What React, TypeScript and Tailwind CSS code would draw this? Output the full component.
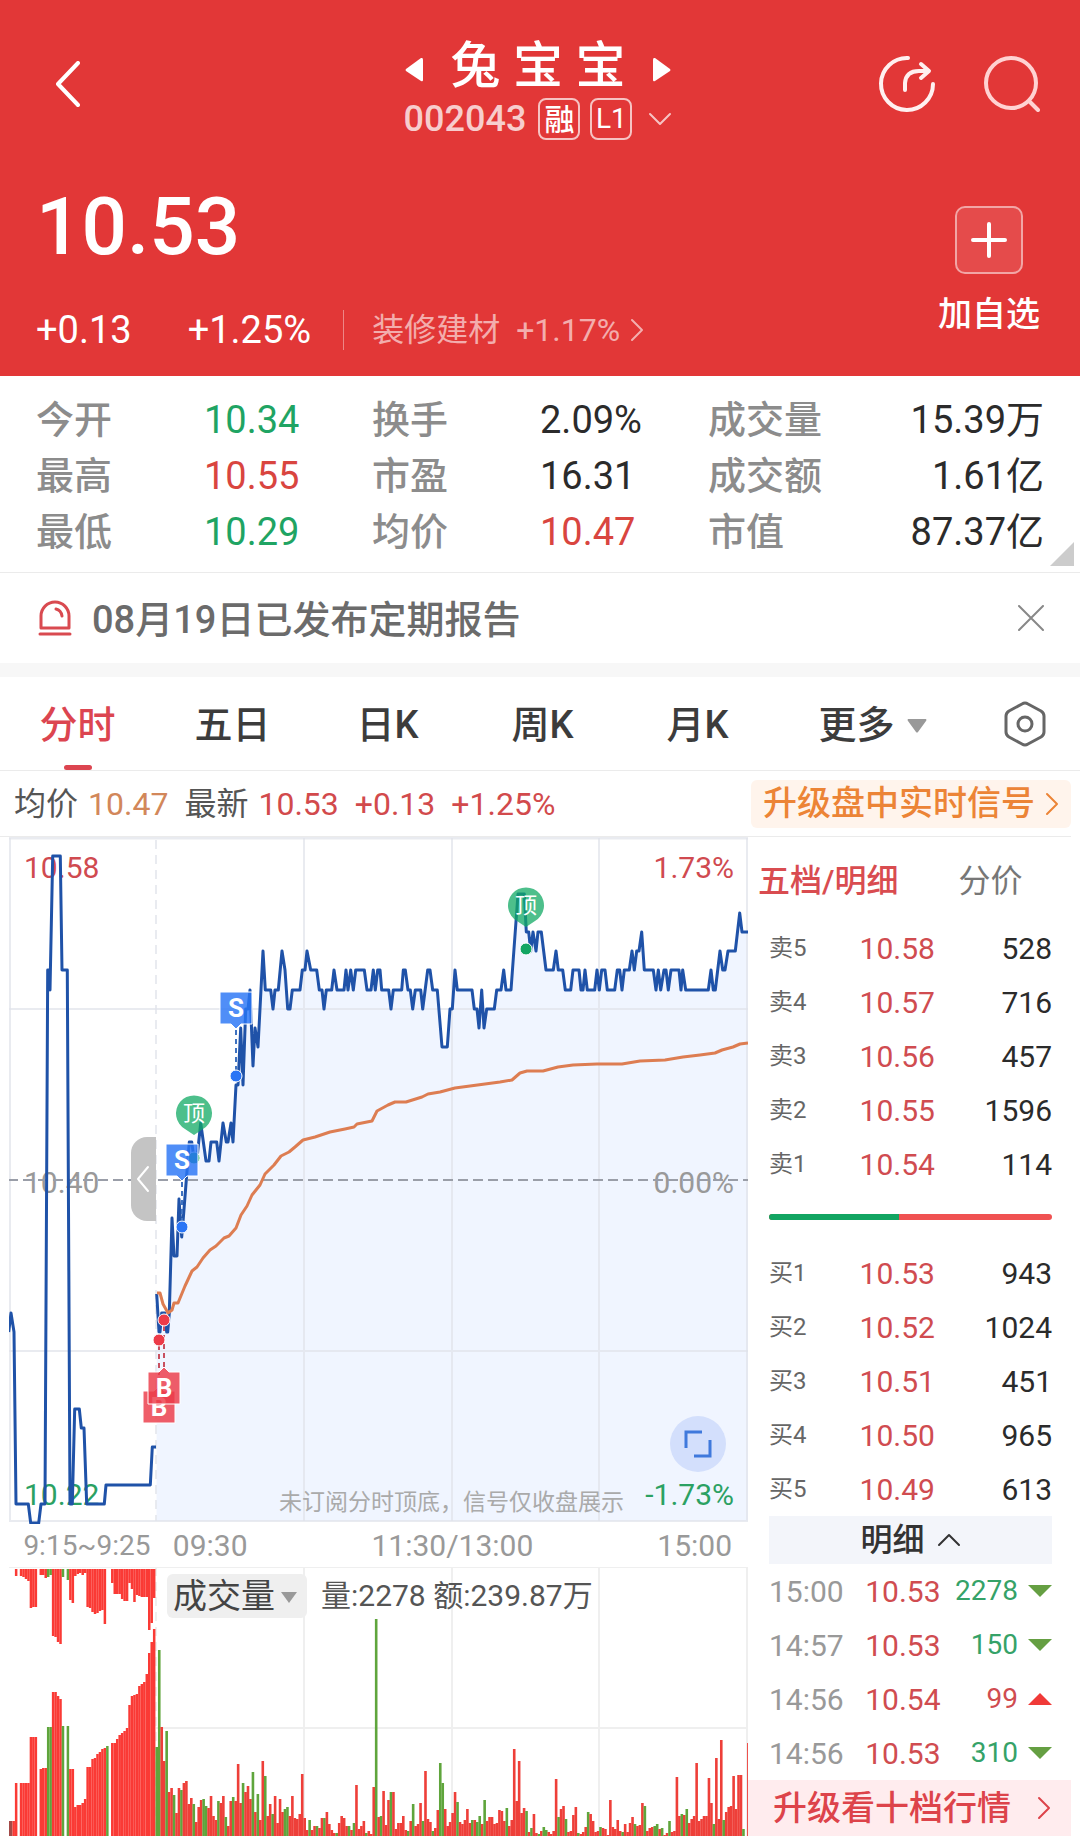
import { useState } from 'react'
import clsx from 'clsx'

type Point = [number, number]

type Level = {
  label: string
  price: string
  amount: number
}

type Trade = {
  time: string
  price: string
  amount: number
  side: 'buy' | 'sell'
}

const stats = [
  { label: '今开', value: '10.34', color: 'text-[#1fa463]' },
  { label: '换手', value: '2.09%', color: 'text-[#2b2b2b]' },
  { label: '成交量', value: '15.39万', color: 'text-[#2b2b2b]' },
  { label: '最高', value: '10.55', color: 'text-[#d9453f]' },
  { label: '市盈', value: '16.31', color: 'text-[#2b2b2b]' },
  { label: '成交额', value: '1.61亿', color: 'text-[#2b2b2b]' },
  { label: '最低', value: '10.29', color: 'text-[#1fa463]' },
  { label: '均价', value: '10.47', color: 'text-[#d9453f]' },
  { label: '市值', value: '87.37亿', color: 'text-[#2b2b2b]' }
]

const periods = ['分时', '五日', '日K', '周K', '月K']

const asks: Level[] = [
  { label: '卖5', price: '10.58', amount: 528 },
  { label: '卖4', price: '10.57', amount: 716 },
  { label: '卖3', price: '10.56', amount: 457 },
  { label: '卖2', price: '10.55', amount: 1596 },
  { label: '卖1', price: '10.54', amount: 114 }
]

const bids: Level[] = [
  { label: '买1', price: '10.53', amount: 943 },
  { label: '买2', price: '10.52', amount: 1024 },
  { label: '买3', price: '10.51', amount: 451 },
  { label: '买4', price: '10.50', amount: 965 },
  { label: '买5', price: '10.49', amount: 613 }
]

const trades: Trade[] = [
  { time: '15:00', price: '10.53', amount: 2278, side: 'sell' },
  { time: '14:57', price: '10.53', amount: 150, side: 'sell' },
  { time: '14:56', price: '10.54', amount: 99, side: 'buy' },
  { time: '14:56', price: '10.53', amount: 310, side: 'sell' }
]

// [x, ticks away from the 10.40 close], x in thirds of a unit
const auctionTicks: Point[] = [
  [26, -8], [33, -7], [42, -8], [48, -17], [85, -17], [92, -18], [116, -18], [123, -17], [135, -17],
  [143, 11], [147, 11], [150, 10], [158, 17], [181, 17], [186, 11], [202, 11], [210, -17], [217, -17],
  [224, -12], [238, -12], [244, -13], [252, -13], [260, -17], [313, -17], [318, -16], [451, -16],
  [457, -14], [468, -14]
]

const priceTicks: Point[] = [
  [470, -6], [477, -8], [480, -8], [485, -7], [494, -7], [500, -8], [503, -8], [508, -7], [516, -2],
  [522, -4], [531, -4], [537, -1], [545, -3], [550, -2], [568, 2], [575, 2], [583, 1], [590, 1],
  [602, 3], [618, 1], [627, 1], [633, 2], [650, 2], [657, 1], [669, 3], [679, 2], [684, 2], [693, 3],
  [699, 2], [708, 5], [714, 5], [722, 8], [729, 5], [737, 9], [744, 9], [750, 10], [759, 6], [765, 8],
  [774, 7], [789, 12], [796, 10], [812, 10], [819, 9], [825, 10], [835, 10], [846, 12], [855, 11],
  [863, 9], [870, 9], [877, 10], [900, 10], [907, 11], [915, 11], [921, 12], [932, 11], [950, 11],
  [958, 10], [966, 10], [972, 9], [979, 10], [995, 10], [1002, 11], [1011, 10], [1032, 10], [1038, 11],
  [1044, 10], [1052, 11], [1060, 10], [1067, 11], [1093, 11], [1101, 10], [1113, 10], [1120, 11],
  [1126, 10], [1133, 11], [1140, 11], [1145, 10], [1166, 10], [1173, 9], [1180, 10], [1205, 10],
  [1210, 11], [1216, 11], [1224, 10], [1231, 10], [1238, 9], [1246, 10], [1262, 10], [1268, 9],
  [1283, 11], [1290, 11], [1298, 10], [1312, 10], [1326, 7], [1342, 7], [1350, 9], [1357, 9],
  [1365, 11], [1372, 10], [1416, 10], [1423, 9], [1431, 9], [1437, 8], [1445, 10], [1452, 8],
  [1460, 9], [1483, 9], [1490, 10], [1503, 10], [1511, 11], [1518, 10], [1533, 10], [1554, 15],
  [1573, 15], [1579, 13], [1586, 13], [1592, 12], [1599, 13], [1608, 12], [1614, 13], [1624, 13],
  [1638, 11], [1660, 11], [1668, 12], [1675, 11], [1688, 11], [1696, 10], [1712, 10], [1719, 11],
  [1737, 11], [1743, 10], [1749, 10], [1755, 11], [1762, 10], [1784, 10], [1791, 11], [1798, 10],
  [1805, 11], [1815, 11], [1822, 10], [1844, 10], [1852, 11], [1859, 11], [1866, 10], [1873, 11],
  [1888, 11], [1896, 12], [1903, 11], [1910, 12], [1917, 12], [1925, 13], [1933, 11], [1960, 11],
  [1968, 10], [1975, 11], [1982, 10], [1992, 11], [1998, 11], [2005, 10], [2013, 11], [2037, 11],
  [2043, 10], [2048, 11], [2057, 10], [2125, 10], [2133, 11], [2140, 10], [2146, 10], [2160, 12],
  [2168, 11], [2175, 11], [2184, 12], [2206, 12], [2219, 14], [2226, 13], [2245, 13]
]

const averagePoints: Point[] = [
  [157, 1293], [160, 1293], [163, 1304], [168, 1313], [172, 1310], [174, 1303], [178, 1303], [185, 1286],
  [192, 1271], [197, 1267], [203, 1258], [210, 1250], [216, 1246], [224, 1238], [229, 1236], [236, 1228],
  [241, 1215], [247, 1206], [252, 1195], [260, 1185], [265, 1174], [274, 1165], [281, 1156], [289, 1152],
  [295, 1147], [303, 1140], [315, 1137], [330, 1132], [345, 1129], [354, 1127], [357, 1124], [372, 1121],
  [377, 1111], [388, 1105], [395, 1102], [406, 1102], [422, 1097], [428, 1094], [440, 1092], [455, 1088],
  [470, 1086], [485, 1084], [500, 1082], [512, 1080], [520, 1073], [527, 1071], [543, 1071], [558, 1067],
  [573, 1065], [597, 1064], [622, 1064], [640, 1061], [665, 1060], [683, 1057], [700, 1055], [715, 1053],
  [722, 1050], [733, 1047], [740, 1044], [748, 1043]
]

// bar heights, negative = falling minute
const auctionMatched = [
  15, 15, 15, 53, 0, 53, 53, 53, 53, 99, 99, 99, 0, 67, 68, 68, -109, -109, 144, 144, 140, 137, -110, 0,
  -110, 67, 67, 29, 31, 31, 33, 37, 69, 69, 77, 78, 82, 84, 87, 88, -90, 0, 93, 93, 97, 101, 103, 105,
  108, 131, 140, 141, 142, 150, 152, 154, 162, 183, 194, 207
]

const auctionUnmatched = [
  0, 0, 0, 7, 0, 7, 8, 10, 12, 39, 38, 38, 0, 6, 6, 9, -8, -6, 67, 68, 73, 75, -8, 0, -11, 31, 34, 7, 5,
  4, 6, 4, 38, 39, 43, 45, 44, 42, 41, 55, 0, 0, 14, 25, 25, 25, 30, 32, 32, 14, 20, 33, 26, 27, 28, 28,
  28, 61, 54, 29
]

const volumes = [
  -89, -186, 109, 75, -105, 44, 48, -41, 23, 48, -46, 53, 55, 32, 38, -32, 14, 29, 36, -37, -30, 28, 40,
  20, 16, -35, 33, 40, -19, 10, 35, -39, 35, 72, 33, -53, 44, 50, 37, -64, 24, -42, 16, 75, -60, 20, 32,
  -22, 40, 13, 37, 24, -27, -29, 20, 40, 18, 17, 22, 62, 18, 6, -16, 6, 10, -10, 8, 18, -18, 24, 12, 6,
  3, -3, 13, 20, 18, 10, -10, 6, -13, 51, 7, 10, 15, -3, 5, 2, 49, -217, 19, -20, 45, 11, 36, -44, 44, 7,
  13, 13, 20, 6, -5, 15, -32, 10, 12, 33, -15, 65, 17, 14, -5, 8, 26, -73, -53, 27, 10, 14, 23, 44, -34,
  14, 12, 16, 27, 13, -16, 16, -14, -20, 12, -36, 15, 19, 19, 12, 13, 26, 25, 15, -28, 10, 16, 87, 35, 75,
  23, 28, -25, 4, -8, 22, 3, -2, 5, -9, -6, 4, 2, 5, 57, -19, 27, 30, -17, 4, 5, 21, 29, -3, 2, 4, 9, -24,
  22, 15, 4, 5, -9, 8, 7, 1, 36, 9, 7, 16, 5, -4, 12, 4, 13, 19, -12, 10, 11, 33, -30, 5, 8, 9, -10, -12,
  7, -8, 1, 3, -15, 4, 5, 59, 20, -22, 21, -27, 13, 17, 20, 73, 15, 17, 20, 20, 58, 33, -12, 78, 17, 96,
  -16, 24, 29, 30, 60, 27, 61, 61, -7, 0, 93
]

const BAR_STEP = 2.465

const toPath = (points: Point[]) => points.map(([x, y]) => `${x},${y}`).join(' ')

const ticksToPath = (ticks: Point[]) =>
  toPath(ticks.map(([x, tick]) => [Math.round(x / 0.3) / 10, Math.round(1180 - tick * 19.05)]))

const Chevron = ({ d, box, className }: { d: string; box: string; className: string }) => (
  <svg
    viewBox={box}
    className={className}
    fill="none"
    stroke="currentColor"
    strokeLinecap="round"
    strokeLinejoin="round"
    aria-hidden="true"
  >
    <path d={d} />
  </svg>
)

const Header = () => (
  <header className="bg-[#e23737] text-white pl-9 pr-10 pt-9 pb-6">
    <div className="grid grid-cols-[1fr_auto_1fr]">
      <button aria-label="返回" className="h-24 w-16 pl-5 flex items-center">
        <Chevron box="0 0 24 46" d="M22 2 L2 23 L22 44" className="w-6 h-[46px] stroke-4" />
      </button>
      <div>
        <div className="h-14 flex items-center justify-center gap-7">
          <button aria-label="上一只" className="pt-3">
            <svg viewBox="0 0 18 26" className="w-[18px] h-[26px] fill-white">
              <path d="M17 1 Q18 1 18 3 V23 Q18 25 16 24 L1 14 Q0 13 1 12 L16 1 Z" />
            </svg>
          </button>
          <h1 className="pt-1 text-[50px] leading-none font-medium">兔 宝 宝</h1>
          <button aria-label="下一只" className="pt-3">
            <svg viewBox="0 0 18 26" className="w-[18px] h-[26px] fill-white">
              <path d="M1 1 Q0 1 0 3 V23 Q0 25 2 24 L17 14 Q18 13 17 12 L2 1 Z" />
            </svg>
          </button>
        </div>
        <div className="h-[54px] flex items-center justify-center">
          <span className="text-4xl font-medium text-white/75">002043</span>
          <span className="ml-3 size-[42px] rounded-lg border-2 border-white/70 flex items-center justify-center text-[30px] font-medium">
            融
          </span>
          <span className="ml-2.5 size-[42px] rounded-lg border-2 border-white/70 flex items-center justify-center text-[28px]">
            L1
          </span>
          <button aria-label="展开" className="ml-4 text-white/70">
            <Chevron box="0 0 24 14" d="M2 2 L12 12 L22 2" className="w-6 h-3.5 stroke-2" />
          </button>
        </div>
      </div>
      <div className="h-24 flex items-center justify-end gap-12">
        <button aria-label="分享">
          <svg viewBox="0 0 58 58" className="size-[58px]" fill="none" stroke="#fff0f0" strokeWidth="4" strokeLinecap="round" strokeLinejoin="round">
            <path d="M30 3 A26 26 0 1 0 55 29" />
            <path d="M27 35 V28 Q28 16 41 16 H50" />
            <path d="M43 9 L51 16 L43 23" />
          </svg>
        </button>
        <button aria-label="搜索">
          <svg viewBox="0 0 56 58" className="w-14 h-[58px]" fill="none" stroke="#ffd2d2" strokeWidth="4" strokeLinecap="round">
            <circle cx="27" cy="28" r="25" />
            <path d="M46 47 L54 55" />
          </svg>
        </button>
      </div>
    </div>
    <div className="flex justify-between">
      <div>
        <p className="h-[162px] flex items-center text-[80px] font-medium">10.53</p>
        <div className="h-11 flex items-center text-[38px]">
          <span>+0.13</span>
          <span className="ml-14">+1.25%</span>
          <span className="ml-8 w-px h-10 bg-white/40" />
          <a href="#sector" className="ml-7 flex items-center text-[32px] text-white/60">
            装修建材
            <span className="ml-4">+1.17%</span>
            <Chevron box="0 0 14 24" d="M2 2 L12 12 L2 22" className="ml-2.5 w-3.5 h-6 stroke-2" />
          </a>
        </div>
      </div>
      <button className="pt-[60px] flex flex-col items-center self-start">
        <span className="size-[68px] rounded-[10px] border-2 border-white/50 bg-white/10 flex items-center justify-center">
          <svg viewBox="0 0 36 36" className="size-9" fill="none" stroke="white" strokeWidth="4" strokeLinecap="round">
            <path d="M18 2 V34 M2 18 H34" />
          </svg>
        </span>
        <span className="mt-4 text-[34px] leading-12 font-medium">加自选</span>
      </button>
    </div>
  </header>
)

const Stats = () => (
  <section className="relative px-9 pt-4 pb-3 border-b border-[#ebebeb]">
    <dl className="grid grid-cols-3 text-[38px]">
      {stats.map((el, i) => (
        <div key={el.label} className={clsx('h-14 flex items-center', i % 3 === 2 && 'justify-between')}>
          <dt className={clsx('font-medium text-[#8c8c8c]', i % 3 !== 2 && 'w-1/2')}>{el.label}</dt>
          <dd className={el.color}>{el.value}</dd>
        </div>
      ))}
    </dl>
    <svg viewBox="0 0 24 24" className="absolute right-1.5 bottom-1.5 size-6 fill-[#ccc]" aria-hidden="true">
      <path d="M24 0 V24 H0 Z" />
    </svg>
  </section>
)

const Notice = () => (
  <section className="h-[90px] px-9 flex items-center">
    <svg viewBox="0 0 38 38" className="size-[38px]" fill="none" stroke="#d94a50" strokeWidth="3" strokeLinecap="round" aria-hidden="true">
      <path d="M5 29 V17 A14 14 0 0 1 33 17 V29 Z" strokeLinejoin="round" />
      <path d="M20 10 Q25 11 26 17" />
      <path d="M4 35 H34" />
    </svg>
    <p className="ml-[18px] pt-1 text-[38px] font-medium text-[#6b6b6b]">08月19日已发布定期报告</p>
    <button aria-label="关闭" className="ml-auto text-[#888]">
      <Chevron box="0 0 26 26" d="M1 1 L25 25 M25 1 L1 25" className="size-[26px] stroke-2" />
    </button>
  </section>
)

const PeriodTabs = () => {
  const [active, setActive] = useState('分时')

  return (
    <nav className="h-[94px] border-t-[14px] border-[#f7f7f7] box-content">
      <div className="h-full grid grid-cols-[repeat(5,31fr)_39fr_22fr] border-b border-[#ebebeb] text-[38px] font-medium text-[#3c3c3c]">
        {periods.map((el) => (
          <button
            key={el}
            onClick={() => setActive(el)}
            className={clsx('relative flex items-center justify-center pt-1', active === el && 'text-[#dc4550]')}
          >
            {el}
            {active === el && <span className="absolute bottom-0 w-7 h-[5px] rounded-full bg-[#dc4550]" />}
          </button>
        ))}
        <button className="flex items-center justify-center gap-3 pt-1">
          更多
          <svg viewBox="0 0 20 14" className="w-5 h-3.5 fill-[#999]" aria-hidden="true">
            <path d="M1 0 H19 Q20 1 19 2 L11 13 Q10 14 9 13 L1 2 Q0 1 1 0 Z" />
          </svg>
        </button>
        <button aria-label="设置" className="flex items-center justify-center">
          <svg viewBox="0 0 42 46" className="w-[42px] h-[46px]" fill="none" stroke="#666" strokeWidth="3" strokeLinejoin="round">
            <path d="M18 3 Q21 1 24 3 L37 10 Q40 12 40 15 V31 Q40 34 37 36 L24 43 Q21 45 18 43 L5 36 Q2 34 2 31 V15 Q2 12 5 10 Z" />
            <circle cx="21" cy="23" r="7" />
          </svg>
        </button>
      </div>
    </nav>
  )
}

const QuoteLine = () => (
  <section className="mr-[9px] h-[66px] pl-3.5 flex items-center text-[32px] text-[#d24a4c] border-b border-[#ebebeb]">
    <span className="text-[#555]">均价</span>
    <span className="ml-2.5 text-[#d2875a]">10.47</span>
    <span className="ml-4 text-[#555]">最新</span>
    <span className="ml-2.5">10.53</span>
    <span className="ml-4">+0.13</span>
    <span className="ml-4">+1.25%</span>
    <a href="#signals" className="ml-auto h-12 px-3 rounded-md bg-[#fff4ec] flex items-center gap-2.5 text-[34px] font-medium text-[#ec8436]">
      升级盘中实时信号
      <Chevron box="0 0 14 24" d="M2 2 L12 12 L2 22" className="w-3.5 h-6 stroke-2" />
    </a>
  </section>
)

const Flag = ({ x, y, letter }: { x: number; y: number; letter: 'S' | 'B' }) => (
  <g>
    <path
      d={
        letter === 'S'
          ? `M${x - 16} ${y - 16} h32 v32 h-11 l-5 5 l-5 -5 h-11 Z`
          : `M${x - 16} ${y - 16} h11 l5 -5 l5 5 h11 v32 h-32 Z`
      }
      fill={letter === 'S' ? '#2a75f5' : '#ec3b48'}
      fillOpacity="0.82"
      stroke="white"
    />
    <text x={x} y={y + 9} textAnchor="middle" className="text-[26px] font-bold fill-white">
      {letter}
    </text>
  </g>
)

const TopPin = ({ x, y }: { x: number; y: number }) => (
  <g>
    <path
      d={`M${x} ${y + 22} L${x - 9} ${y + 16} A18 18 0 1 1 ${x + 9} ${y + 16} Z`}
      fill="#12aa64"
      fillOpacity="0.75"
    />
    <text x={x} y={y + 8} textAnchor="middle" className="text-[22px] fill-white">
      顶
    </text>
  </g>
)

const Dot = ({ x, y, color }: { x: number; y: number; color: string }) => (
  <circle cx={x} cy={y} r="6" fill={color} stroke="white" />
)

const PriceChart = () => {
  const price = ticksToPath(priceTicks)

  return (
    <div className="relative">
      <svg viewBox="9 837 739 687" className="block w-full" role="img" aria-label="分时走势">
        <polygon points={`156.5,1521 ${price} 748,1521`} fill="#f0f5ff" />
        <g stroke="#dfe3ea" strokeOpacity="0.7" strokeWidth="2" fill="none">
          <path d="M9 1009 H748 M9 1351 H748 M304 838 V1521 M452 838 V1521 M599 838 V1521" />
          <path d="M10 838 V1521 H747 V838" />
          <path d="M156 840 V1521" strokeDasharray="9 6" />
          <path d="M9 838 H748" strokeWidth="3" />
        </g>
        <g className="text-[30px]">
          <text x="24" y="878" fill="#d04a50">10.58</text>
          <text x="734" y="878" textAnchor="end" fill="#d04a50">1.73%</text>
          <text x="24" y="1193" fill="#999">10.40</text>
          <text x="734" y="1193" textAnchor="end" fill="#999">0.00%</text>
          <text x="24" y="1505" fill="#2ba163">10.22</text>
          <text x="734" y="1505" textAnchor="end" fill="#2ba163">-1.73%</text>
        </g>
        <text x="624" y="1510" textAnchor="end" className="text-[23px]" fill="#aaa">
          未订阅分时顶底，信号仅收盘展示
        </text>
        <path d="M8 1180 H748" stroke="#9a9ea8" strokeWidth="2" strokeDasharray="10 5" />
        <g fill="none" stroke="#1f52a8" strokeWidth="3" strokeLinejoin="round">
          <polyline points={ticksToPath(auctionTicks)} />
          <polyline points={price} />
        </g>
        <polyline points={toPath(averagePoints)} fill="none" stroke="#dd7d52" strokeWidth="3" strokeLinejoin="round" />
        <g strokeWidth="2" strokeDasharray="5 4">
          <path d="M236 1030 V1070 M182 1182 V1220" stroke="#3f72c0" />
          <path d="M159 1345 V1375 M164 1326 V1368" stroke="#c8505f" />
        </g>
        <Dot x={194} y={1158} color="#12a562" />
        <Dot x={236} y={1076} color="#2a75f5" />
        <Dot x={182} y={1227} color="#2a75f5" />
        <Dot x={159} y={1340} color="#ec3b48" />
        <Dot x={164} y={1320} color="#ec3b48" />
        <Dot x={526} y={949} color="#12a562" />
        <TopPin x={194} y={1113} />
        <TopPin x={526} y={905} />
        <Flag x={236} y={1008} letter="S" />
        <Flag x={182} y={1160} letter="S" />
        <Flag x={159} y={1407} letter="B" />
        <Flag x={164} y={1388} letter="B" />
      </svg>
      <button
        aria-label="收起竞价"
        className="absolute left-[16.5%] top-[43.7%] w-[25px] h-[84px] rounded-l-2xl bg-[#c4c4c4] text-white flex items-center justify-center"
      >
        <Chevron box="0 0 14 28" d="M12 2 L2 14 L12 26" className="w-3.5 h-7 stroke-2" />
      </button>
      <button
        aria-label="全屏"
        className="absolute left-[89.5%] top-[84.3%] size-14 rounded-full bg-[#d3dffc] flex items-center justify-center"
      >
        <svg viewBox="0 0 28 28" className="size-7" fill="none" stroke="#3f79dc" strokeWidth="3">
          <path d="M2 18 V2 H18 M26 10 V26 H10" />
        </svg>
      </button>
    </div>
  )
}

const TimeAxis = () => (
  <div className="h-[43px] flex items-center text-[30px] text-[#999]">
    <span className="w-1/5 pl-2 text-center text-[28px]">9:15~9:25</span>
    <div className="flex-1 px-4 flex justify-between">
      <span>09:30</span>
      <span>11:30/13:00</span>
      <span>15:00</span>
    </div>
  </div>
)

const VolumeChart = () => (
  <div className="relative">
    <svg viewBox="9 1567 739 270" className="block w-full" role="img" aria-label="成交量">
      <g stroke="#efefef" strokeWidth="2" fill="none">
        <path d="M9 1567 H748 M156 1728 H748 M304 1567 V1836 M452 1567 V1836 M599 1567 V1836 M747 1567 V1836" />
        <path d="M156 1567 V1836" strokeDasharray="9 6" />
      </g>
      {auctionMatched.map((h, i) => (
        <rect
          key={i}
          x={7.5 + i * BAR_STEP}
          y={1836 - Math.abs(h)}
          width="2.5"
          height={Math.abs(h)}
          fill={i < 2 ? '#a34a48' : h < 0 ? '#5fa53c' : '#fa3a35'}
        />
      ))}
      {auctionUnmatched.map((h, i) => (
        <rect
          key={i}
          x={7.5 + i * BAR_STEP}
          y={1569}
          width="2.5"
          height={Math.abs(h)}
          fill={h < 0 ? '#5fa53c' : '#fa3a35'}
        />
      ))}
      {volumes.map((h, i) => (
        <rect
          key={i}
          x={155.5 + i * BAR_STEP}
          y={1836 - Math.abs(h)}
          width="2.6"
          height={Math.abs(h)}
          fill={h < 0 ? '#5fa53c' : '#ee3f39'}
        />
      ))}
    </svg>
    <div className="absolute top-1.5 left-[158px] flex items-center gap-3.5 text-[#555]">
      <div className="relative">
        <select
          aria-label="指标"
          className="h-11 w-[140px] pl-1.5 appearance-none rounded-md bg-[#efefef] text-[34px] leading-11 text-[#444]"
        >
          <option>成交量</option>
        </select>
        <svg viewBox="0 0 16 12" className="absolute right-2.5 top-[18px] w-4 h-3 fill-[#999] pointer-events-none" aria-hidden="true">
          <path d="M0 0 H16 L8 11 Z" />
        </svg>
      </div>
      <p className="text-[30px] whitespace-nowrap">量:2278 额:239.87万</p>
    </div>
  </div>
)

const LevelRows = ({ levels }: { levels: Level[] }) => (
  <table className="w-full text-[30px]">
    <tbody>
      {levels.map((el) => (
        <tr key={el.label} className="h-[54px]">
          <th scope="row" className="w-[32%] p-0 text-left text-2xl font-normal text-[#666]">
            {el.label}
          </th>
          <td className="p-0 text-[#d04c50]">{el.price}</td>
          <td className="p-0 text-right text-[#2b2b2b]">{el.amount}</td>
        </tr>
      ))}
    </tbody>
  </table>
)

const OrderBook = () => (
  <aside>
    <div className="h-[84px] pl-2.5 pt-1 flex items-center gap-[60px] text-[32px]">
      <button className="font-medium text-[#d94c50]">五档/明细</button>
      <button className="text-[#777]">分价</button>
    </div>
    <div className="pl-[21px] pr-7">
      <LevelRows levels={asks} />
      <div className="mt-[23px] mb-[26px] h-1.5 rounded-full overflow-hidden bg-[#f05252]">
        <div className="h-full w-[46%] bg-[#12a562]" />
      </div>
      <LevelRows levels={bids} />
      <button className="w-full h-12 bg-[#f3f5fa] flex items-center justify-center gap-3 text-[32px] font-medium text-[#333]">
        明细
        <Chevron box="0 0 24 14" d="M2 12 L12 2 L22 12" className="w-6 h-3.5 stroke-2" />
      </button>
      <table className="w-full text-[30px]">
        <tbody>
          {trades.map((el, i) => (
            <tr key={i} className="h-[54px]">
              <td className="w-[34%] p-0 text-[#999]">{el.time}</td>
              <td className="p-0 text-[#d04c50]">{el.price}</td>
              <td
                className={clsx(
                  'p-0 text-right text-[28px]',
                  el.side === 'sell' ? 'text-[#35a268]' : 'text-[#d04c50]'
                )}
              >
                {el.amount}
              </td>
              <td className="w-[34px] p-0">
                <svg viewBox="0 0 24 12" className="ml-auto w-6 h-3" aria-hidden="true">
                  {el.side === 'sell' ? (
                    <path d="M0 0 H24 L12 12 Z" fill="#659f42" />
                  ) : (
                    <path d="M0 12 H24 L12 0 Z" fill="#f03a38" />
                  )}
                </svg>
              </td>
            </tr>
          ))}
        </tbody>
      </table>
    </div>
    <a
      href="#level2"
      className="mr-[9px] h-14 pl-[25px] pr-5 bg-[#ffecee] flex items-center justify-between text-[34px] font-medium text-[#dd434a]"
    >
      升级看十档行情
      <Chevron box="0 0 14 24" d="M2 2 L12 12 L2 22" className="w-3.5 h-6 stroke-2" />
    </a>
  </aside>
)

const App = () => (
  <main className="bg-white whitespace-nowrap font-['Roboto','Noto_Sans_CJK_SC',sans-serif]">
    <Header />
    <Stats />
    <Notice />
    <PeriodTabs />
    <QuoteLine />
    <div className="grid grid-cols-[187fr_83fr]">
      <div className="pl-[9px]">
        <PriceChart />
        <TimeAxis />
        <VolumeChart />
      </div>
      <OrderBook />
    </div>
  </main>
)

export default App
